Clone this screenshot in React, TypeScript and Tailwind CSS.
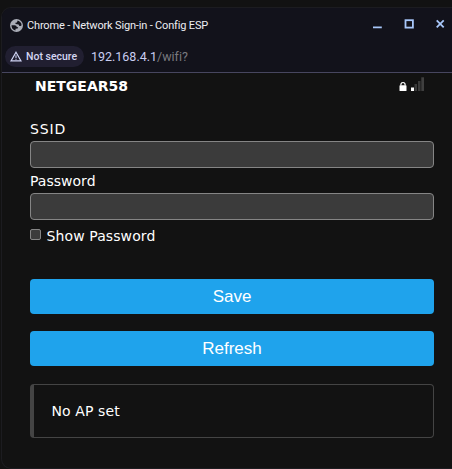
import type { ReactNode } from 'react';

function GlobeIcon() {
  return (
    <svg className="size-[13px] shrink-0" viewBox="0 0 13 13">
      <circle cx="6.5" cy="6.5" r="6.5" fill="#a9acb6" />
      <path
        d="M1.5 6.2 L4.4 6.2 C6 6.2 6.8 7 6.6 8 L8.2 8.2 L7.6 9.6 L5.6 9.8 L5.4 11.5 C2.9 10.9 1.4 8.8 1.5 6.2Z M7.6 1.5 C9.8 2 11.6 4 11.6 6.2 L10.6 7.1 L9.4 6.9 L8.6 5.4 L5.6 5 L5.4 3.7 L7 3.4Z"
        fill="#12121b"
      />
    </svg>
  );
}

function WarningIcon() {
  return (
    <svg className="h-[11px] w-[12px] shrink-0" viewBox="0 0 12 11" fill="none" stroke="#cfd3f3">
      <path d="M6 1.3 L11 9.9 H1 Z" strokeWidth="1.2" />
      <path d="M6 4.2 V6.9 M6 7.7 V8.8" strokeWidth="1.1" />
    </svg>
  );
}

function WindowControls() {
  return (
    <svg className="h-[10px] w-[74px]" viewBox="0 0 74 10" fill="none" stroke="#a8c7fa">
      <path d="M1 8.3 H9.8" strokeWidth="1.8" />
      <rect x="33.5" y="1.2" width="7.4" height="7.4" strokeWidth="1.8" />
      <path d="M64.7 1.4 L71.7 8.4 M71.7 1.4 L64.7 8.4" strokeWidth="1.8" />
    </svg>
  );
}

function SignalIcons() {
  return (
    <svg className="h-[15px] w-[26px]" viewBox="0 0 26 15">
      <path d="M1.9 8.5 V7.6 C1.9 4.8 6.1 4.8 6.1 7.6 V8.5" fill="none" stroke="#fff" strokeWidth="1.2" />
      <rect x="0.5" y="8.3" width="7" height="5.7" rx="0.6" fill="#fff" />
      <rect x="12" y="10.5" width="3" height="3.5" fill="#fff" />
      <rect x="15.5" y="7" width="2.5" height="7" fill="#3a3a3a" />
      <rect x="19" y="4" width="2.5" height="10" fill="#3a3a3a" />
      <rect x="22.3" y="0.3" width="2.7" height="13.7" fill="#3f3f3f" />
    </svg>
  );
}

function Field({ label, id, labelClass }: { label: string; id: string; labelClass: string }) {
  return (
    <div className="flex h-[52px] flex-col">
      <label htmlFor={id} className="h-[25px] leading-[27px]">
        <span className={labelClass}>{label}</span>
      </label>
      <input id={id} className="h-[27px] w-full rounded-[4px] border border-[#858585] bg-[#3b3b3b] outline-none" />
    </div>
  );
}

function ActionButton({ children }: { children: ReactNode }) {
  return (
    <button className="h-[35px] w-full rounded-[4px] bg-[#1fa3ec] font-['Liberation_Sans',sans-serif] text-[17px] leading-[35px] text-white">
      {children}
    </button>
  );
}

export default function App() {
  return (
    <div className="h-[469px] w-[452px] overflow-hidden bg-[#121212] pt-[7px] pl-px">
      <div className="flex h-[462px] flex-col overflow-hidden rounded-[10px] rounded-r-none border border-r-0 border-[#1c1c20] bg-[#121212]">
        <header className="h-[65px] shrink-0 border-b border-[#47465f] bg-[#12121b] font-[Roboto,sans-serif]">
          <div className="flex h-[34px] items-center pl-[8px]">
            <GlobeIcon />
            <h1 className="mt-[2px] ml-[4px] whitespace-nowrap text-[11px] leading-[16px] tracking-[-0.17px] text-[#ededf2]">
              Chrome - Network Sign-in - Config ESP
            </h1>
            <div className="mr-[6px] ml-auto flex -translate-y-px">
              <WindowControls />
            </div>
          </div>
          <div className="flex h-[29px] items-center pl-[3px]">
            <div className="flex h-[21px] w-[79px] items-center rounded-full bg-[#211f31] pl-[5px]">
              <WarningIcon />
              <span className="ml-[4px] whitespace-nowrap text-[10.5px] leading-[16px] font-medium text-[#d3d5f3]">
                Not secure
              </span>
            </div>
            <div className="ml-[7px] whitespace-nowrap text-[12.5px] leading-[18px] tracking-[-0.01px] text-[#c9cdf1]">
              192.168.4.1<span className="text-[#79797f]">/wifi?</span>
            </div>
          </div>
        </header>
        <main className="flex flex-col pr-[18px] pl-[28px] font-['DejaVu_Sans',sans-serif] text-[14px] text-white">
          <div className="flex h-[43px] items-start justify-between pr-[9px] pl-[5px]">
            <span className="mt-[3px] text-[14px] leading-[20px] font-bold">NETGEAR58</span>
            <span className="mt-[4px]">
              <SignalIcons />
            </span>
          </div>
          <Field label="SSID" id="ssid" labelClass="tracking-[0.9px]" />
          <Field label="Password" id="password" labelClass="tracking-[0.02px]" />
          <label className="flex h-[32px] items-center">
            <input
              type="checkbox"
              className="mb-[3px] size-[11px] appearance-none rounded-[2px] border border-[#858585] bg-[#3b3b3b]"
            />
            <span className="ml-[5.5px] tracking-[0.1px]">Show Password</span>
          </label>
          <div className="mt-[27px] flex flex-col gap-[17px]">
            <ActionButton>Save</ActionButton>
            <ActionButton>Refresh</ActionButton>
          </div>
          <div className="mt-[18px] flex h-[54px] items-center rounded-[4px] border border-l-4 border-[#444] pl-[17.5px] tracking-[0.1px]">
            No AP set
          </div>
        </main>
      </div>
    </div>
  );
}
